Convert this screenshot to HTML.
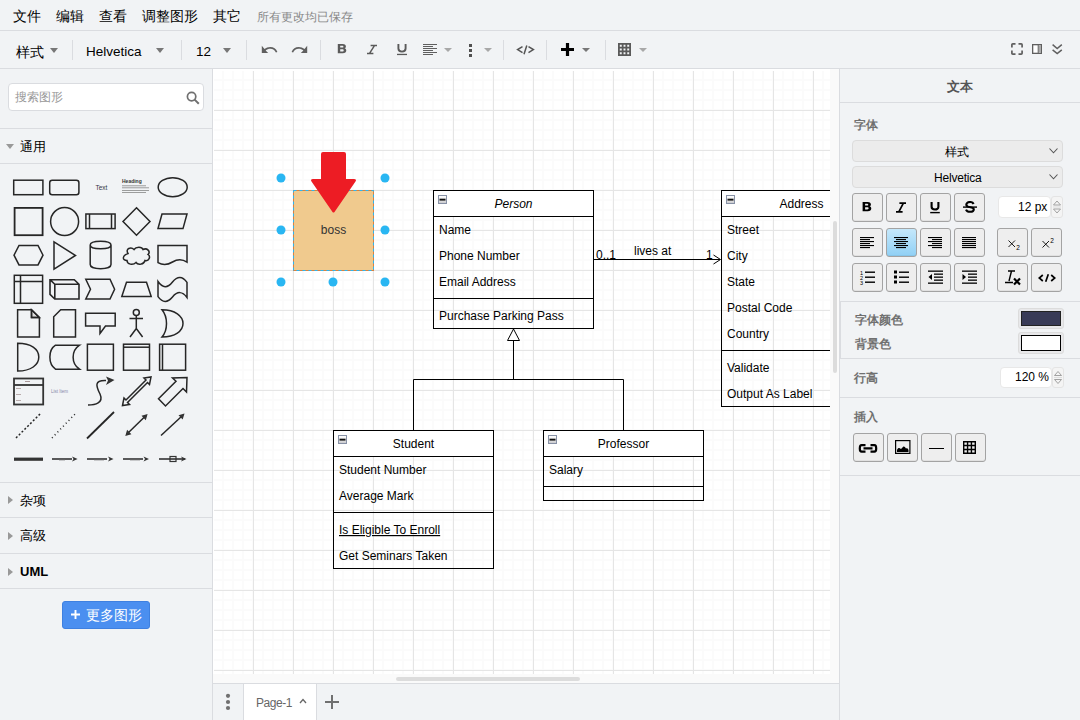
<!DOCTYPE html>
<html><head><meta charset="utf-8">
<style>
*{box-sizing:border-box}
html,body{margin:0;padding:0}
body{width:1080px;height:720px;overflow:hidden;position:relative;background:#f1f3f5;font-family:"Liberation Sans",sans-serif;color:#000}
.a{position:absolute;white-space:nowrap}
.hl{position:absolute;background:#dadce0}
.mi{position:absolute;top:7px;font-size:14px;line-height:18px;color:#000}
.sep{position:absolute;top:40px;width:1px;height:20px;background:#dadce0}
.tri{position:absolute;width:0;height:0;border-left:4.5px solid transparent;border-right:4.5px solid transparent;border-top:5px solid #777}
.btn{position:absolute;border:1px solid #a3a3a3;border-radius:3px;background:#eeeeee;box-shadow:inset 0 -1px 0 rgba(0,0,0,0.05)}
.lbl{position:absolute;font-size:12px;font-weight:bold;color:#707070;line-height:14px}
</style></head>
<body>
<!-- menubar -->
<div class="hl" style="left:0;top:30px;width:1080px;height:1px"></div>
<div class="mi" style="left:13px">文件</div>
<div class="mi" style="left:56px">编辑</div>
<div class="mi" style="left:99px">查看</div>
<div class="mi" style="left:142px">调整图形</div>
<div class="mi" style="left:213px">其它</div>
<div class="mi" style="left:257px;font-size:12px;color:#888;top:8px">所有更改均已保存</div>

<!-- toolbar -->
<div class="hl" style="left:0;top:68px;width:1080px;height:1px"></div>

<div class="mi" style="left:16px;top:43px;font-size:14px">样式</div>
<div class="tri" style="left:50px;top:48px"></div>
<div class="sep" style="left:72px"></div>
<div class="a" style="left:86px;top:43px;font-size:13.5px;line-height:18px;color:#000">Helvetica</div>
<div class="tri" style="left:156px;top:48px"></div>
<div class="sep" style="left:181px"></div>
<div class="a" style="left:196px;top:43px;font-size:13.5px;line-height:18px;color:#000">12</div>
<div class="tri" style="left:223px;top:48px"></div>
<div class="sep" style="left:246px"></div>
<svg class="a" style="left:261px;top:45px" width="17" height="9" viewBox="0 0 17 9">
 <path d="M0.8 0.8 V8 H7.2 L4.6 5.6 C6 4.3 7.4 3.7 9.4 3.7 C11.8 3.7 14 5.2 14.9 7.5 L16.4 6.9 C15.2 3.6 12.5 1.9 9.3 1.9 C7 1.9 5.1 2.7 3.5 4 Z" fill="#5f5f5f"/>
</svg>
<svg class="a" style="left:291px;top:45px" width="17" height="9" viewBox="0 0 17 9">
 <g transform="translate(17,0) scale(-1,1)"><path d="M0.8 0.8 V8 H7.2 L4.6 5.6 C6 4.3 7.4 3.7 9.4 3.7 C11.8 3.7 14 5.2 14.9 7.5 L16.4 6.9 C15.2 3.6 12.5 1.9 9.3 1.9 C7 1.9 5.1 2.7 3.5 4 Z" fill="#5f5f5f"/></g>
</svg>
<div class="sep" style="left:320px"></div>
<svg class="a" style="left:337px;top:43px" width="10" height="11" viewBox="0 0 10 11">
 <path fill-rule="evenodd" fill="#5a5a5a" d="M0.8 1 H5.6 C8 1 8.9 2.2 8.9 3.4 C8.9 4.4 8.3 5 7.6 5.3 C8.6 5.6 9.3 6.4 9.3 7.6 C9.3 9.2 8.1 10.2 5.8 10.2 H0.8 Z M3.2 2.7 V4.6 H5.3 C6 4.6 6.4 4.2 6.4 3.65 C6.4 3.1 6 2.7 5.3 2.7 Z M3.2 6.3 V8.5 H5.5 C6.3 8.5 6.7 8.1 6.7 7.4 C6.7 6.7 6.3 6.3 5.5 6.3 Z"/>
</svg>
<svg class="a" style="left:366px;top:44px" width="12" height="11" viewBox="0 0 12 11">
 <path d="M4.6 1.4 H11 M1 9.6 H7.4 M8.6 1.4 L3.4 9.6" stroke="#5a5a5a" stroke-width="1.5" fill="none"/>
</svg>
<svg class="a" style="left:396px;top:43px" width="12" height="13" viewBox="0 0 12 13">
 <path d="M2.4 1 V5.6 C2.4 9.6 9.6 9.6 9.6 5.6 V1" stroke="#5a5a5a" stroke-width="1.9" fill="none"/><rect x="1" y="10.8" width="10" height="1.3" fill="#5a5a5a"/>
</svg>
<svg class="a" style="left:423px;top:44px" width="15" height="12" viewBox="0 0 15 12">
 <g fill="#5f5f5f"><rect x="0" y="0" width="14" height="1"/><rect x="0" y="2" width="10" height="1"/><rect x="0" y="4" width="14" height="1"/><rect x="0" y="6" width="10" height="1"/><rect x="0" y="8" width="14" height="1"/><rect x="0" y="10" width="10" height="1"/></g>
</svg>
<div class="tri" style="left:444px;top:48px;border-top-color:#a8a8a8;border-left-width:4px;border-right-width:4px;border-top-width:4px"></div>
<svg class="a" style="left:469px;top:44px" width="3" height="13" viewBox="0 0 3 13">
 <g fill="#505050"><rect x="0" y="0" width="3" height="3"/><rect x="0" y="5" width="3" height="3"/><rect x="0" y="10" width="3" height="3"/></g>
</svg>
<div class="tri" style="left:484px;top:48px;border-top-color:#a8a8a8;border-left-width:4px;border-right-width:4px;border-top-width:4px"></div>
<div class="sep" style="left:503px"></div>
<svg class="a" style="left:516px;top:45px" width="19" height="10" viewBox="0 0 19 10">
 <path d="M6.5 1.6 L1.6 4.6 L6.5 7.6 M12.5 1.6 L17.4 4.6 L12.5 7.6 M10.8 0.5 L8 9.2" stroke="#555" stroke-width="1.5" fill="none"/>
</svg>
<div class="sep" style="left:546px"></div>
<svg class="a" style="left:561px;top:43px" width="13" height="13" viewBox="0 0 13 13">
 <path d="M6.5 0 V13 M0 6.5 H13" stroke="#000" stroke-width="3.2" fill="none"/>
</svg>
<div class="tri" style="left:582px;top:48px;border-top-color:#777;border-left-width:4px;border-right-width:4px;border-top-width:4px"></div>
<div class="sep" style="left:605px"></div>
<svg class="a" style="left:618px;top:43px" width="13" height="13" viewBox="0 0 13 13">
 <path d="M0.9 0.9 H12.1 V12.1 H0.9 Z M0.9 4.65 H12.1 M0.9 8.35 H12.1 M4.65 0.9 V12.1 M8.35 0.9 V12.1" stroke="#5a5a5a" stroke-width="1.8" fill="none"/>
</svg>
<div class="tri" style="left:639px;top:48px;border-top-color:#a8a8a8;border-left-width:4px;border-right-width:4px;border-top-width:4px"></div>
<svg class="a" style="left:1011px;top:43px" width="12" height="12" viewBox="0 0 12 12">
 <path d="M0.9 4.5 V1.8 Q0.9 0.9 1.8 0.9 H4.5 M7.5 0.9 H10.2 Q11.1 0.9 11.1 1.8 V4.5 M11.1 7.5 V10.2 Q11.1 11.1 10.2 11.1 H7.5 M4.5 11.1 H1.8 Q0.9 11.1 0.9 10.2 V7.5" stroke="#5f5f5f" stroke-width="1.7" fill="none"/>
</svg>
<svg class="a" style="left:1032px;top:44px" width="10" height="10" viewBox="0 0 10 10">
 <rect x="0.65" y="0.65" width="8.7" height="8.7" stroke="#5f5f5f" stroke-width="1.3" fill="#fff"/><rect x="6.5" y="1.3" width="2.4" height="7.4" fill="#a8a8a8"/><path d="M6.2 1 V9" stroke="#5f5f5f" stroke-width="1"/>
</svg>
<svg class="a" style="left:1052px;top:44px" width="11" height="11" viewBox="0 0 11 11">
 <path d="M0.6 0.7 L5.2 4.5 L9.8 0.7 M0.6 5.8 L5.2 9.6 L9.8 5.8" stroke="#5f5f5f" stroke-width="1.5" fill="none"/>
</svg>

<!-- sidebar -->
<div class="hl" style="left:212px;top:69px;width:1px;height:651px"></div>

<div class="a" style="left:8px;top:83px;width:196px;height:28px;background:#fff;border:1px solid #dadce0;border-radius:4px"></div>
<div class="a" style="left:15px;top:89px;font-size:12px;line-height:16px;color:#999">搜索图形</div>
<svg class="a" style="left:186px;top:91px" width="14" height="14" viewBox="0 0 14 14">
 <circle cx="5.6" cy="5.6" r="4.2" stroke="#707070" stroke-width="1.7" fill="none"/><path d="M8.6 8.6 L12.8 12.8" stroke="#707070" stroke-width="2" />
</svg>
<div class="hl" style="left:0;top:128px;width:212px;height:1px"></div>
<div class="a" style="left:6px;top:144px;width:0;height:0;border-left:4px solid transparent;border-right:4px solid transparent;border-top:5px solid #999"></div>
<div class="a" style="left:20px;top:139px;font-size:13px;line-height:16px;color:#000">通用</div>
<div class="hl" style="left:0;top:163px;width:212px;height:1px"></div>
<svg class="a" style="left:0;top:164px" width="212" height="318" viewBox="0 164 212 318">
<g stroke="#262626" stroke-width="1.5" fill="none">
 <rect x="13.7" y="180.2" width="29.2" height="14.5"/>
 <rect x="49.7" y="180.2" width="29.2" height="14.5" rx="2.5"/>
 <ellipse cx="172.7" cy="187.2" rx="14.5" ry="9.5"/>
 <rect x="14.6" y="207.9" width="28" height="27.3" stroke-width="1.8"/>
 <circle cx="64.6" cy="221.5" r="14"/>
 <rect x="85.9" y="214" width="29.2" height="14.6"/><path d="M89.5 214 V228.6 M111.5 214 V228.6"/>
 <path d="M136.5 207.7 L150 221.5 L136.5 235.2 L123 221.5 Z"/>
 <path d="M162 214 H187 L183 228.6 H158 Z"/>
 <path d="M19 245.5 H38 L43 255.2 L38 264.9 H19 L14 255.2 Z"/>
 <path d="M54 241.8 L75.5 255.5 L54 269.2 Z"/>
 <path d="M90.2 245 C90.2 240 111 240 111 245 V264.5 C111 270 90.2 270 90.2 264.5 Z M90.2 245 C90.2 250 111 250 111 245"/>
 <path transform="translate(0,1.5)" d="M128 252 C125 247 131 245 134 248 C136 245 142 245 143 248 C147 246 151 250 148 253 C151 255 149 260 145 259 C144 263 138 264 136 261 C133 264 127 263 127 259 C122 259 122 254 128 252 Z"/>
 <path d="M158 245.6 H187 V262.1 Q180 257.3 172.5 262 Q165 266.7 158 262.6 Z"/>
 <rect x="14.3" y="275.3" width="28.3" height="28"/><path d="M14.3 281.5 H42.6 M20.5 275.3 V303.3"/>
 <path d="M50 279.7 H74.3 L79 284.3 V299 H54.8 L50 294.3 Z M50 279.7 L54.8 284.3 H79 M54.8 284.3 V299" stroke-width="1.6"/>
 <path d="M85.8 279.3 H110 L114.6 289.3 L110 299 H85.8 L90.5 289.3 Z"/>
 <path d="M126.5 282.3 H146.5 L151.2 296.4 H121.8 Z"/>
 <path d="M158 281.5 Q165 291.6 172.5 282 Q180 273 187 282.4 V297.5 Q180 288 172.5 297 Q165 306 158 296.6 Z"/>
 <path d="M31.5 309.7 V317.5 H39.4 Z" fill="#ddd"/><path d="M17.6 309.7 H31.5 L39.4 317.5 V337 H17.6 Z M31.5 309.7 V317.5 H39.4"/>
 <path d="M60.7 309.7 H75.5 V337 H53.7 V316.7 Z"/>
 <path d="M85.6 313.3 H115.2 V326 H105.5 L100 333.5 V326 H85.6 Z"/>
 <circle cx="136.3" cy="312.5" r="3"/><path d="M136.3 315.5 V328.5 M129.5 318.5 H143 M130 337 L136.3 328.5 L142.6 337"/>
 <path d="M162 309.7 C175 309.7 183 316 183 323.5 C183 331 175 337 162 337 C168 330 168 317 162 309.7 Z"/>
 <path d="M17.7 343.2 C31 343.2 38.8 349 38.8 357 C38.8 365 31 371 17.7 371 Z"/>
 <path d="M55.5 345.2 H79.5 C71 351 71 363.5 79.5 369.2 H55.5 C48 364 48 350 55.5 345.2 Z"/>
 <rect x="87.4" y="344.2" width="26" height="26"/>
 <rect x="123.5" y="344.2" width="26" height="26"/><path d="M123.5 347.2 H149.5" />
 <rect x="159.6" y="344.2" width="26" height="26"/><path d="M162.5 344.2 V370.2" />
 <path d="M88 405 C95 405 104 403 100 394 C96 386 94 380 106 380.5" />
 <path d="M16 438 L41 413" stroke-dasharray="2 2"/>
 <path d="M52 438 L76 413" stroke-dasharray="1 3"/>
 <path d="M87 438.5 L114 412" stroke-width="1.8"/>
 <path d="M127 434 L146 415.5" />
 <path d="M161 435.5 L182 416" />
 <path d="M52 459 H72"/><path d="M87 459 H107"/><path d="M123 459 H143"/><path d="M159 459 H185"/>
</g>
<g fill="#333">
 <path d="M114.5 380 L106 376.5 L108 380.5 L106 385 Z"/>
 <path d="M147.6 414 L141.5 415.8 L145.8 420.2 Z M125.3 436 L131.4 434.2 L127.1 429.8 Z"/>
 <path d="M184.5 413.5 L178.5 415.3 L182.7 419.6 Z"/>
 <rect x="14" y="457.6" width="29" height="3.2"/>
 <path d="M77.6 459 L72 456.5 L73.5 459 L72 461.5 Z M113.5 459 L108 456.5 L109.5 459 L108 461.5 Z M149 459 L143.5 456.5 L145 459 L143.5 461.5 Z M186.5 459 L181 456.5 L182.5 459 L181 461.5 Z"/>
</g>
<g stroke="#262626" stroke-width="1.5" fill="none">
 <path d="M122.5 405.5 L124 398 L126 400 L146 380 L144 378 L151 377 L149.5 384.5 L147.5 382.5 L127.5 402.5 L129.5 404.5 Z"/>
 <path d="M158.5 398.8 L176 381.3 L172.5 378 L187 377.5 L186.5 392 L183 388.5 L165.5 406 Z"/>
</g>
<g stroke="#333" stroke-width="1.8" fill="none">
 <rect x="14" y="378.5" width="29.2" height="26"/><path d="M14 385 H43.2"/>
</g>
<rect x="170" y="456.5" width="6" height="5" fill="none" stroke="#333" stroke-width="1.2"/>
<g fill="#999" font-size="4" font-family="Liberation Sans">
 <text x="95.5" y="189.5" font-size="6.5" fill="#334">Text</text>
 <text x="122" y="183" font-size="5" font-weight="bold" fill="#333">Heading</text>
 <rect x="122" y="185.5" width="24" height="0.7" fill="#777"/><rect x="122" y="187.5" width="27" height="0.7" fill="#777"/><rect x="122" y="190" width="27" height="0.7" fill="#777"/><rect x="122" y="192" width="24" height="0.7" fill="#777"/>
 <text x="51" y="393" font-size="4.5" fill="#88a">List Item</text>
 <rect x="16" y="388" width="5" height="0.8" fill="#a99"/><rect x="16" y="394" width="5" height="0.8" fill="#a99"/><rect x="16" y="400" width="5" height="0.8" fill="#a99"/>
 <rect x="25" y="381" width="5" height="1" fill="#a99"/>
 <rect x="59" y="459.5" width="6" height="0.8" fill="#666"/>
 <rect x="94" y="459.5" width="10" height="0.8" fill="#666"/><rect x="130" y="459.5" width="10" height="0.8" fill="#666"/>
</g>
</svg>
<div class="hl" style="left:0;top:482px;width:212px;height:1px"></div>
<div class="a" style="left:8px;top:496px;width:0;height:0;border-top:4px solid transparent;border-bottom:4px solid transparent;border-left:5px solid #999"></div>
<div class="a" style="left:20px;top:493px;font-size:13px;line-height:16px">杂项</div>
<div class="hl" style="left:0;top:517px;width:212px;height:1px"></div>
<div class="a" style="left:8px;top:532px;width:0;height:0;border-top:4px solid transparent;border-bottom:4px solid transparent;border-left:5px solid #999"></div>
<div class="a" style="left:20px;top:528px;font-size:13px;line-height:16px">高级</div>
<div class="hl" style="left:0;top:553px;width:212px;height:1px"></div>
<div class="a" style="left:8px;top:568px;width:0;height:0;border-top:4px solid transparent;border-bottom:4px solid transparent;border-left:5px solid #999"></div>
<div class="a" style="left:20px;top:564px;font-size:13px;line-height:16px;font-weight:bold">UML</div>
<div class="hl" style="left:0;top:588px;width:212px;height:1px"></div>
<div class="a" style="left:62px;top:601px;width:88px;height:28px;background:#4b8ff0;border-radius:3px;border:1px solid #3e80e0"></div>
<svg class="a" style="left:71px;top:610px" width="9" height="9" viewBox="0 0 9 9"><path d="M4.5 0 V9 M0 4.5 H9" stroke="#fff" stroke-width="1.9"/></svg><div class="a" style="left:86px;top:606px;font-size:14px;line-height:18px;color:#fff">更多图形</div>


<!-- canvas -->
<div id="canvas" style="position:absolute;left:213px;top:69px;width:626px;height:614px;background:#fafafa;overflow:hidden">
  <div style="position:absolute;left:0;top:0;width:617px;height:605px;background:#fff"></div><div style="position:absolute;left:1px;top:2px;width:616px;height:603px;background-color:#fff;
    background-image:linear-gradient(transparent 39px,#e5e5e5 39px,#e5e5e5 40px,transparent 40px),linear-gradient(90deg,transparent 39px,#e5e5e5 39px,#e5e5e5 40px,transparent 40px),linear-gradient(transparent 8px,#fbfbfb 8px,#fbfbfb 10px,transparent 10px),linear-gradient(90deg,transparent 8px,#fbfbfb 8px,#fbfbfb 10px,transparent 10px);
    background-size:40px 40px,40px 40px,10px 10px,10px 10px;background-position:0 0,0 0,0 0,0 0"></div>
</div>
<svg class="a" style="left:0;top:0" width="1080" height="720"><defs><linearGradient id="mg" x1="0" y1="0" x2="0" y2="1"><stop offset="0" stop-color="#ffffff"/><stop offset="0.45" stop-color="#f0f0f0"/><stop offset="1" stop-color="#c4c4c8"/></linearGradient><clipPath id="cc"><rect x="214" y="71" width="616" height="603"/></clipPath></defs><g clip-path="url(#cc)"><rect x="293.5" y="190.5" width="80" height="80" fill="#f0ca8e" stroke="#e0803a" stroke-width="1"/><rect x="293.5" y="190.5" width="80" height="80" fill="none" stroke="#29b6f2" stroke-width="1" stroke-dasharray="3 3"/><path d="M323 152 H344 Q346 152 346 154 V179 H354 Q357 179 355.5 181.5 L334.5 212 Q333.5 213 332.5 212 L311.5 181.5 Q310 179 313 179 H321 V154 Q321 152 323 152 Z" fill="#ed1c24"/><text x="333.5" y="234" text-anchor="middle" font-size="12" fill="#333">boss</text><circle cx="281" cy="178" r="4.5" fill="#29b6f2"/><circle cx="385" cy="178" r="4.5" fill="#29b6f2"/><circle cx="281" cy="230" r="4.5" fill="#29b6f2"/><circle cx="385" cy="230" r="4.5" fill="#29b6f2"/><circle cx="281" cy="282" r="4.5" fill="#29b6f2"/><circle cx="333" cy="282" r="4.5" fill="#29b6f2"/><circle cx="385" cy="282" r="4.5" fill="#29b6f2"/><g font-size="12" fill="#000" font-family="Liberation Sans"><rect x="433" y="190" width="161" height="27" fill="#fff"/><rect x="433.5" y="190.5" width="160" height="138" fill="none" stroke="#000" stroke-width="1"/><path d="M433 216.5 H594" stroke="#000"/><path d="M433 298.5 H594" stroke="#000"/><rect x="438.5" y="195.5" width="8" height="8" fill="url(#mg)" stroke="#8791a6" stroke-width="1"/><rect x="439.5" y="198.7" width="6" height="1.9" fill="#111"/><text x="513.5" y="208" text-anchor="middle" font-style="italic">Person</text><text x="439" y="234" >Name</text><text x="439" y="260" >Phone Number</text><text x="439" y="286" >Email Address</text><text x="439" y="320" >Purchase Parking Pass</text><rect x="721" y="190" width="161" height="27" fill="#fff"/><rect x="721.5" y="190.5" width="160" height="216" fill="none" stroke="#000" stroke-width="1"/><path d="M721 216.5 H882" stroke="#000"/><path d="M721 350.5 H882" stroke="#000"/><rect x="726.5" y="195.5" width="8" height="8" fill="url(#mg)" stroke="#8791a6" stroke-width="1"/><rect x="727.5" y="198.7" width="6" height="1.9" fill="#111"/><text x="801.5" y="208" text-anchor="middle" >Address</text><text x="727" y="234" >Street</text><text x="727" y="260" >City</text><text x="727" y="286" >State</text><text x="727" y="312" >Postal Code</text><text x="727" y="338" >Country</text><text x="727" y="372" >Validate</text><text x="727" y="398" >Output As Label</text><rect x="333" y="430" width="161" height="27" fill="#fff"/><rect x="333.5" y="430.5" width="160" height="138" fill="none" stroke="#000" stroke-width="1"/><path d="M333 456.5 H494" stroke="#000"/><path d="M333 512.5 H494" stroke="#000"/><rect x="338.5" y="435.5" width="8" height="8" fill="url(#mg)" stroke="#8791a6" stroke-width="1"/><rect x="339.5" y="438.7" width="6" height="1.9" fill="#111"/><text x="413.5" y="448" text-anchor="middle" >Student</text><text x="339" y="474" >Student Number</text><text x="339" y="500" >Average Mark</text><text x="339" y="534" text-decoration="underline">Is Eligible To Enroll</text><text x="339" y="560" >Get Seminars Taken</text></g><g font-size="12" fill="#000" font-family="Liberation Sans"><rect x="543" y="430" width="161" height="27" fill="#fff"/><rect x="543.5" y="430.5" width="160" height="70" fill="none" stroke="#000"/><path d="M543 456.5 H704 M543 486.5 H704" stroke="#000"/><rect x="548.5" y="435.5" width="8" height="8" fill="url(#mg)" stroke="#8791a6" stroke-width="1"/><rect x="549.5" y="438.7" width="6" height="1.9" fill="#111"/><text x="623.5" text-anchor="middle" y="448">Professor</text><text x="549" y="474">Salary</text></g><g stroke="#000" stroke-width="1" fill="none"><path d="M593 259.5 H720"/><path d="M713.5 255 L720.5 259.5 L713.5 264"/><path d="M413.5 430 V379.5 H623.5 V430 M513.5 379.5 V340.5"/><path d="M513.5 329 L519.5 340.5 H507.5 Z" fill="#fff"/></g><g font-size="12" fill="#000" font-family="Liberation Sans"><text x="596" y="259">0..1</text><text x="634" y="255">lives at</text><text x="706" y="259">1</text></g></g></svg>
<div class="hl" style="left:839px;top:69px;width:1px;height:651px"></div>
<div class="hl" style="left:213px;top:683px;width:626px;height:1px"></div>

<!-- tabbar -->

<div class="hl" style="left:243px;top:684px;width:1px;height:36px"></div>
<div class="a" style="left:244px;top:684px;width:72px;height:36px;background:#fff"></div>
<div class="hl" style="left:316px;top:684px;width:1px;height:36px"></div>
<svg class="a" style="left:224px;top:692px" width="8" height="20" viewBox="0 0 8 20"><g fill="#707070"><circle cx="4" cy="3.8" r="2.1"/><circle cx="4" cy="10" r="2.1"/><circle cx="4" cy="16" r="2.1"/></g></svg>
<div class="a" style="left:256px;top:696px;font-size:12px;line-height:14px;color:#666;letter-spacing:-0.45px">Page-1</div>
<svg class="a" style="left:299px;top:698px" width="8" height="6" viewBox="0 0 8 6"><path d="M1 5 L4 1.5 L7 5" stroke="#666" stroke-width="1.3" fill="none"/></svg>
<svg class="a" style="left:324px;top:694px" width="16" height="16" viewBox="0 0 16 16"><path d="M8 1 V15 M1 8 H15" stroke="#707070" stroke-width="2" fill="none"/></svg>
<div class="a" style="left:396px;top:677px;width:184px;height:4px;background:#dcdcdc;border-radius:2px"></div>
<div class="a" style="left:833px;top:221px;width:4px;height:152px;background:#dcdcdc;border-radius:2px"></div>


<!-- format panel -->
<div class="a" style="left:947px;top:79px;font-size:13px;line-height:16px;font-weight:bold;color:#555">文本</div>
<div class="hl" style="left:840px;top:102px;width:240px;height:1px"></div>
<div class="lbl" style="left:854px;top:118px">字体</div>
<div class="a" style="left:852px;top:140px;width:211px;height:22px;border:1px solid #dcdcdc;border-radius:4px;background:#ececec"></div>
<div class="a" style="left:945px;top:145px;font-size:12px;line-height:14px;color:#000">样式</div>
<svg class="a" style="left:1049px;top:148px" width="9" height="6" viewBox="0 0 9 6"><path d="M0.5 0.5 L4.5 4.8 L8.5 0.5" stroke="#555" stroke-width="1.1" fill="none"/></svg>
<div class="a" style="left:852px;top:166px;width:211px;height:22px;border:1px solid #dcdcdc;border-radius:4px;background:#ececec"></div>
<div class="a" style="left:934px;top:171px;font-size:12px;line-height:14px;color:#000;letter-spacing:-0.2px">Helvetica</div>
<svg class="a" style="left:1049px;top:174px" width="9" height="6" viewBox="0 0 9 6"><path d="M0.5 0.5 L4.5 4.8 L8.5 0.5" stroke="#555" stroke-width="1.1" fill="none"/></svg>
<div class="btn" style="left:852px;top:193px;width:31px;height:29px;"></div>
<div class="btn" style="left:886px;top:193px;width:31px;height:29px;"></div><svg class="a" style="left:862px;top:201px" width="10" height="11" viewBox="0 0 10 11"><path fill-rule="evenodd" fill="#000" d="M0.6 1 H5.6 C8 1 8.9 2.2 8.9 3.4 C8.9 4.4 8.3 5 7.6 5.3 C8.6 5.6 9.3 6.4 9.3 7.6 C9.3 9.2 8.1 10.2 5.8 10.2 H0.6 Z M3.1 2.8 V4.5 H5.2 C5.9 4.5 6.3 4.2 6.3 3.65 C6.3 3.1 5.9 2.8 5.2 2.8 Z M3.1 6.3 V8.4 H5.4 C6.2 8.4 6.6 8 6.6 7.35 C6.6 6.7 6.2 6.3 5.4 6.3 Z"/></svg><div class="btn" style="left:920px;top:193px;width:31px;height:29px;"></div><svg class="a" style="left:895px;top:202px" width="12" height="11" viewBox="0 0 12 11"><path d="M4.4 1.2 H11 M1 9.8 H7.6 M8.4 1.2 L3.8 9.8" stroke="#000" stroke-width="1.7" fill="none"/></svg><div class="btn" style="left:954px;top:193px;width:31px;height:29px;"></div><svg class="a" style="left:929px;top:201px" width="12" height="13" viewBox="0 0 12 13"><path d="M2.6 1 V5.8 C2.6 9.4 9.4 9.4 9.4 5.8 V1" stroke="#000" stroke-width="2.1" fill="none"/><rect x="1.2" y="10.9" width="9.6" height="1.4" fill="#000"/></svg><svg class="a" style="left:962px;top:201px" width="16" height="12" viewBox="0 0 16 12"><path d="M11.6 3 C11 1.6 9.6 1 8 1 C5.8 1 4.3 2.2 4.3 3.7 C4.3 7.2 11.8 5.5 11.8 8.2 C11.8 9.8 10.2 10.8 8 10.8 C6 10.8 4.6 10 4 8.6" stroke="#000" stroke-width="2.1" fill="none"/><rect x="1" y="5.4" width="14" height="1.4" fill="#000"/></svg><div class="a" style="left:998px;top:196px;width:53px;height:22px;background:#fff;border:1px solid #e8e8e8;border-radius:4px"></div>
<div class="a" style="left:1018px;top:200px;font-size:12px;line-height:14px;color:#000">12 px</div>
<div class="a" style="left:1051px;top:196px;width:12px;height:22px;background:#f4f4f4;border:1px solid #e4e4e4;border-radius:3px"></div>
<svg class="a" style="left:1051px;top:196px" width="12" height="22" viewBox="0 0 12 22"><path d="M2.5 9 L6 5 L9.5 9 Z M2.5 13 L6 17 L9.5 13 Z" stroke="#999" stroke-width="0.9" fill="none"/><path d="M2 11 H10" stroke="#ddd"/></svg>
<div class="btn" style="left:852px;top:228px;width:31px;height:29px;"></div>
<svg class="a" style="left:860px;top:237px" width="20" height="16" viewBox="0 0 20 16"><g fill="#000"><rect x="0" y="0" width="14" height="1.1"/><rect x="0" y="2" width="10" height="1.1"/><rect x="0" y="4" width="14" height="1.1"/><rect x="0" y="6" width="10" height="1.1"/><rect x="0" y="8" width="14" height="1.1"/><rect x="0" y="10" width="10" height="1.1"/></g></svg>
<div class="btn" style="left:886px;top:228px;width:31px;height:29px;background:linear-gradient(#c5e8fb,#90d0f5);border-color:#a3a3a3"></div>
<svg class="a" style="left:894px;top:237px" width="20" height="16" viewBox="0 0 20 16"><g fill="#000"><rect x="0" y="0" width="14" height="1.1"/><rect x="2" y="2" width="10" height="1.1"/><rect x="0" y="4" width="14" height="1.1"/><rect x="2" y="6" width="10" height="1.1"/><rect x="0" y="8" width="14" height="1.1"/><rect x="2" y="10" width="10" height="1.1"/></g></svg>
<div class="btn" style="left:920px;top:228px;width:31px;height:29px;"></div>
<svg class="a" style="left:928px;top:237px" width="20" height="16" viewBox="0 0 20 16"><g fill="#000"><rect x="0" y="0" width="14" height="1.1"/><rect x="4" y="2" width="10" height="1.1"/><rect x="0" y="4" width="14" height="1.1"/><rect x="4" y="6" width="10" height="1.1"/><rect x="0" y="8" width="14" height="1.1"/><rect x="4" y="10" width="10" height="1.1"/></g></svg>
<div class="btn" style="left:954px;top:228px;width:31px;height:29px;"></div>
<svg class="a" style="left:962px;top:237px" width="20" height="16" viewBox="0 0 20 16"><g fill="#000"><rect x="0" y="0" width="14" height="1.1"/><rect x="0" y="2" width="14" height="1.1"/><rect x="0" y="4" width="14" height="1.1"/><rect x="0" y="6" width="14" height="1.1"/><rect x="0" y="8" width="14" height="1.1"/><rect x="0" y="10" width="14" height="1.1"/></g></svg>
<div class="btn" style="left:997px;top:228px;width:31px;height:29px;"></div>
<svg class="a" style="left:1007px;top:239px" width="16" height="12" viewBox="0 0 16 12"><path d="M1.5 1.5 L8 8 M8 1.5 L1.5 8" stroke="#000" stroke-width="0.9"/><text x="9.2" y="11" font-size="6.5" font-family="Liberation Sans" fill="#000">2</text></svg>
<div class="btn" style="left:1031px;top:228px;width:31px;height:29px;"></div>
<svg class="a" style="left:1041px;top:237px" width="16" height="12" viewBox="0 0 16 12"><path d="M1.5 4 L8 10.5 M8 4 L1.5 10.5" stroke="#000" stroke-width="0.9"/><text x="9.2" y="6.2" font-size="6.5" font-family="Liberation Sans" fill="#000">2</text></svg>
<div class="btn" style="left:852px;top:263px;width:31px;height:29px;"></div>
<svg class="a" style="left:859px;top:270px" width="17" height="15" viewBox="0 0 17 15"><g fill="#000"><rect x="6" y="1.5" width="10" height="1.4"/><rect x="6" y="6.5" width="10" height="1.4"/><rect x="6" y="11.5" width="10" height="1.4"/></g><text x="1" y="5" font-size="5.5" font-family="Liberation Sans">1</text><text x="1" y="10" font-size="5.5" font-family="Liberation Sans">2</text><text x="1" y="15" font-size="5.5" font-family="Liberation Sans">3</text></svg>
<div class="btn" style="left:886px;top:263px;width:31px;height:29px;"></div>
<svg class="a" style="left:893px;top:270px" width="17" height="15" viewBox="0 0 17 15"><g fill="#000"><rect x="6" y="1.5" width="10" height="1.4"/><rect x="6" y="6.5" width="10" height="1.4"/><rect x="6" y="11.5" width="10" height="1.4"/><rect x="1" y="0.5" width="3" height="3"/><rect x="1" y="5.5" width="3" height="3"/><rect x="1" y="10.5" width="3" height="3"/></g></svg>
<div class="btn" style="left:920px;top:263px;width:31px;height:29px;"></div>
<svg class="a" style="left:928px;top:270px" width="17" height="15" viewBox="0 0 17 15"><g fill="#000"><rect x="0" y="0.5" width="15" height="1.3"/><rect x="6" y="3.5" width="9" height="1.3"/><rect x="6" y="6.5" width="9" height="1.3"/><rect x="6" y="9.5" width="9" height="1.3"/><rect x="0" y="12.5" width="15" height="1.3"/><path d="M4 4 L0.5 7 L4 10 Z"/></g></svg>
<div class="btn" style="left:954px;top:263px;width:31px;height:29px;"></div>
<svg class="a" style="left:962px;top:270px" width="17" height="15" viewBox="0 0 17 15"><g fill="#000"><rect x="0" y="0.5" width="15" height="1.3"/><rect x="6" y="3.5" width="9" height="1.3"/><rect x="6" y="6.5" width="9" height="1.3"/><rect x="6" y="9.5" width="9" height="1.3"/><rect x="0" y="12.5" width="15" height="1.3"/><path d="M0.5 4 L4 7 L0.5 10 Z"/></g></svg>
<div class="btn" style="left:997px;top:263px;width:31px;height:29px;"></div>
<svg class="a" style="left:1004px;top:269px" width="18" height="17" viewBox="0 0 18 17"><path d="M4 2 H11 M7.5 2 L5 12 M1 13.5 H9" stroke="#000" stroke-width="1.4" fill="none"/><path d="M10 9.5 L16 15.5 M16 9.5 L10 15.5" stroke="#000" stroke-width="2.2"/></svg>
<div class="btn" style="left:1031px;top:263px;width:31px;height:29px;"></div>
<svg class="a" style="left:1038px;top:274px" width="18" height="8" viewBox="0 0 18 8"><path d="M4.8 1 L1.2 4 L4.8 7 M13.2 1 L16.8 4 L13.2 7 M10.3 0.3 L7.7 7.7" stroke="#000" stroke-width="1.7" fill="none"/></svg>
<div class="a" style="left:840px;top:301px;width:240px;height:58px;border-top:1px solid #dadce0;border-bottom:1px solid #dadce0;border-left:1px solid #dadce0"></div>
<div class="lbl" style="left:855px;top:313px">字体颜色</div>
<div class="a" style="left:1018px;top:308px;width:46px;height:21px;background:#e8e8ea;border:1px solid #dcdcdc;border-radius:3px"></div>
<div class="a" style="left:1021px;top:311px;width:40px;height:15px;background:#393b57;border:1px solid #222"></div>
<div class="lbl" style="left:855px;top:337px">背景色</div>
<div class="a" style="left:1018px;top:332px;width:46px;height:22px;background:#e8e8ea;border:1px solid #dcdcdc;border-radius:3px"></div>
<div class="a" style="left:1021px;top:335px;width:40px;height:16px;background:#fff;border:1px solid #000"></div>
<div class="lbl" style="left:854px;top:371px">行高</div>
<div class="a" style="left:1000px;top:367px;width:52px;height:21px;background:#fff;border:1px solid #e8e8e8;border-radius:4px"></div>
<div class="a" style="left:1015px;top:370px;font-size:12px;line-height:14px;color:#000">120 %</div>
<div class="a" style="left:1052px;top:367px;width:12px;height:21px;background:#f4f4f4;border:1px solid #e4e4e4;border-radius:3px"></div>
<svg class="a" style="left:1052px;top:367px" width="12" height="21" viewBox="0 0 12 21"><path d="M2.5 8.5 L6 4.5 L9.5 8.5 Z M2.5 12.5 L6 16.5 L9.5 12.5 Z" stroke="#999" stroke-width="0.9" fill="none"/><path d="M2 10.5 H10" stroke="#ddd"/></svg>
<div class="hl" style="left:840px;top:397px;width:240px;height:1px"></div>
<div class="lbl" style="left:854px;top:410px">插入</div>
<div class="btn" style="left:853px;top:433px;width:31px;height:29px;"></div>
<svg class="a" style="left:858px;top:444px" width="20" height="9" viewBox="0 0 20 9"><path d="M7.5 1.2 H3.6 C1.2 1.2 1.2 7.6 3.6 7.6 H7.5 M12.5 1.2 H16.4 C18.8 1.2 18.8 7.6 16.4 7.6 H12.5 M5.5 4.4 H14.5" stroke="#000" stroke-width="2.2" fill="none"/></svg>
<div class="btn" style="left:887px;top:433px;width:31px;height:29px;"></div>
<svg class="a" style="left:895px;top:440px" width="16" height="14" viewBox="0 0 16 14"><rect x="0.6" y="0.6" width="14.3" height="12.8" fill="none" stroke="#000" stroke-width="1.2"/><path d="M2 12 V10 C3 8 4 7.5 5 8.5 C6 9.5 7 8 8 7 C9 6 10 7 11 8.5 C12 8 13 8.5 13.5 10 V12 Z" fill="#000"/></svg>
<div class="btn" style="left:921px;top:433px;width:31px;height:29px;"></div>
<div class="a" style="left:929px;top:448px;width:15px;height:1.3px;background:#000"></div>
<div class="btn" style="left:955px;top:433px;width:31px;height:29px;"></div>
<svg class="a" style="left:963px;top:441px" width="13" height="13" viewBox="0 0 13 13"><path d="M0.7 0.7 H12.3 V12.3 H0.7 Z M0.7 4.57 H12.3 M0.7 8.43 H12.3 M4.57 0.7 V12.3 M8.43 0.7 V12.3" stroke="#000" stroke-width="1.4" fill="none"/></svg>
<div class="hl" style="left:840px;top:475px;width:240px;height:1px"></div>
</body></html>
